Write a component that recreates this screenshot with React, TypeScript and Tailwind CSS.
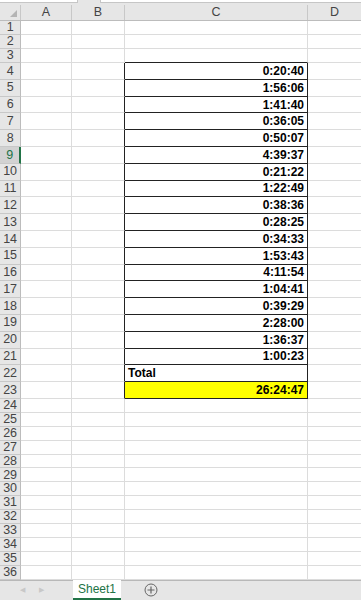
import React from "react";

const times = [
  "0:20:40","1:56:06","1:41:40","0:36:05","0:50:07","4:39:37","0:21:22","1:22:49","0:38:36",
  "0:28:25","0:34:33","1:53:43","4:11:54","1:04:41","0:39:29","2:28:00","1:36:37","1:00:23",
];

function rowHeight(r: number) {
  if (r <= 3) return 14;
  if (r <= 23) return 16.8;
  return 13.92;
}

export default function App() {
  const rows = Array.from({ length: 36 }, (_, i) => i + 1);
  return (
    <div className="w-[361px] h-[600px] overflow-hidden bg-white flex flex-col" style={{ fontFamily: '"Liberation Sans", Arial, sans-serif' }}>
      {/* top strip (formula bar remnants) */}
      <div className="h-[5px] bg-[#e6e6e6] flex shrink-0">
        <div className="w-[78px] h-[3px] bg-white border-b border-r border-[#c6c6c6]" />
        <div className="w-[22px]" />
        <div className="flex-1 h-[3px] bg-white border-b border-l border-[#c6c6c6]" />
      </div>
      {/* column header */}
      <div className="h-[16px] flex shrink-0 bg-[#e6e6e6] border-b border-[#bcbcbc] text-[12.5px] text-[#444]">
        <div className="w-[21px] border-r border-[#c8c8c8] relative">
          <div className="absolute right-[3px] bottom-[3px] w-0 h-0 border-l-[7px] border-l-transparent border-b-[7px] border-b-[#b4b4b4]" />
        </div>
        <div className="w-[51px] border-r border-[#c8c8c8] flex items-center justify-center">A</div>
        <div className="w-[53px] border-r border-[#c8c8c8] flex items-center justify-center">B</div>
        <div className="w-[183px] border-r border-[#c8c8c8] flex items-center justify-center">C</div>
        <div className="flex-1 flex items-center justify-center">D</div>
      </div>
      {/* rows */}
      <div className="flex flex-col shrink-0">
        {rows.map((r) => {
          const inTable = r >= 4 && r <= 23;
          const sel = r === 9;
          return (
            <div key={r} className="flex" style={{ height: rowHeight(r) }}>
              <div
                className={
                  "w-[21px] flex items-center justify-center text-[12.5px] border-b border-r tracking-[-0.3px] " +
                  (sel
                    ? "bg-[#d2d2d2] text-[#217346] border-b-[#c8c8c8] border-r-2 border-r-[#217346]"
                    : "bg-[#e6e6e6] text-[#444] border-b-[#c8c8c8] border-r-[#bcbcbc]")
                }
              >
                {r}
              </div>
              <div className="w-[51px] border-b border-r border-[#dcdcdc]" />
              <div className={"w-[53px] border-b border-r " + (inTable ? "border-b-[#dcdcdc] border-r-[#222]" : "border-[#dcdcdc]")} />
              <div
                className={
                  "w-[183px] border-b border-r flex items-center text-[12px] font-bold text-black " +
                  (r >= 3 && r <= 23 ? "border-b-[#222] " : "border-b-[#dcdcdc] ") +
                  (inTable ? "border-r-[#222] " : "border-r-[#dcdcdc] ") +
                  (r === 23 ? "bg-[#ffff00] " : "") +
                  (r === 22 ? "justify-start pl-[3px]" : "justify-end pr-[3px]")
                }
              >
                {r >= 4 && r <= 21 ? times[r - 4] : r === 22 ? "Total" : r === 23 ? "26:24:47" : null}
              </div>
              <div className="flex-1 border-b border-[#dcdcdc]" />
            </div>
          );
        })}
      </div>
      {/* sheet tabs */}
      <div className="flex-1 bg-[#e6e6e6] border-t border-[#b8b8b8] flex items-stretch">
        <div className="w-[73px] flex items-center pl-[20px] gap-[14px] text-[7px] text-[#c8c8c8]">
          <span>◀</span>
          <span>▶</span>
        </div>
        <div className="w-[48px] -mt-px bg-white border-b-2 border-[#217346] flex items-center justify-center text-[12px] text-[#217346]">
          Sheet1
        </div>
        <div className="flex items-center pl-[23px]">
          <svg width="14" height="14" viewBox="0 0 14 14">
            <circle cx="7" cy="7" r="6" fill="none" stroke="#666" strokeWidth="1" />
            <path d="M7 3.5v7M3.5 7h7" stroke="#666" strokeWidth="1.2" />
          </svg>
        </div>
      </div>
    </div>
  );
}
